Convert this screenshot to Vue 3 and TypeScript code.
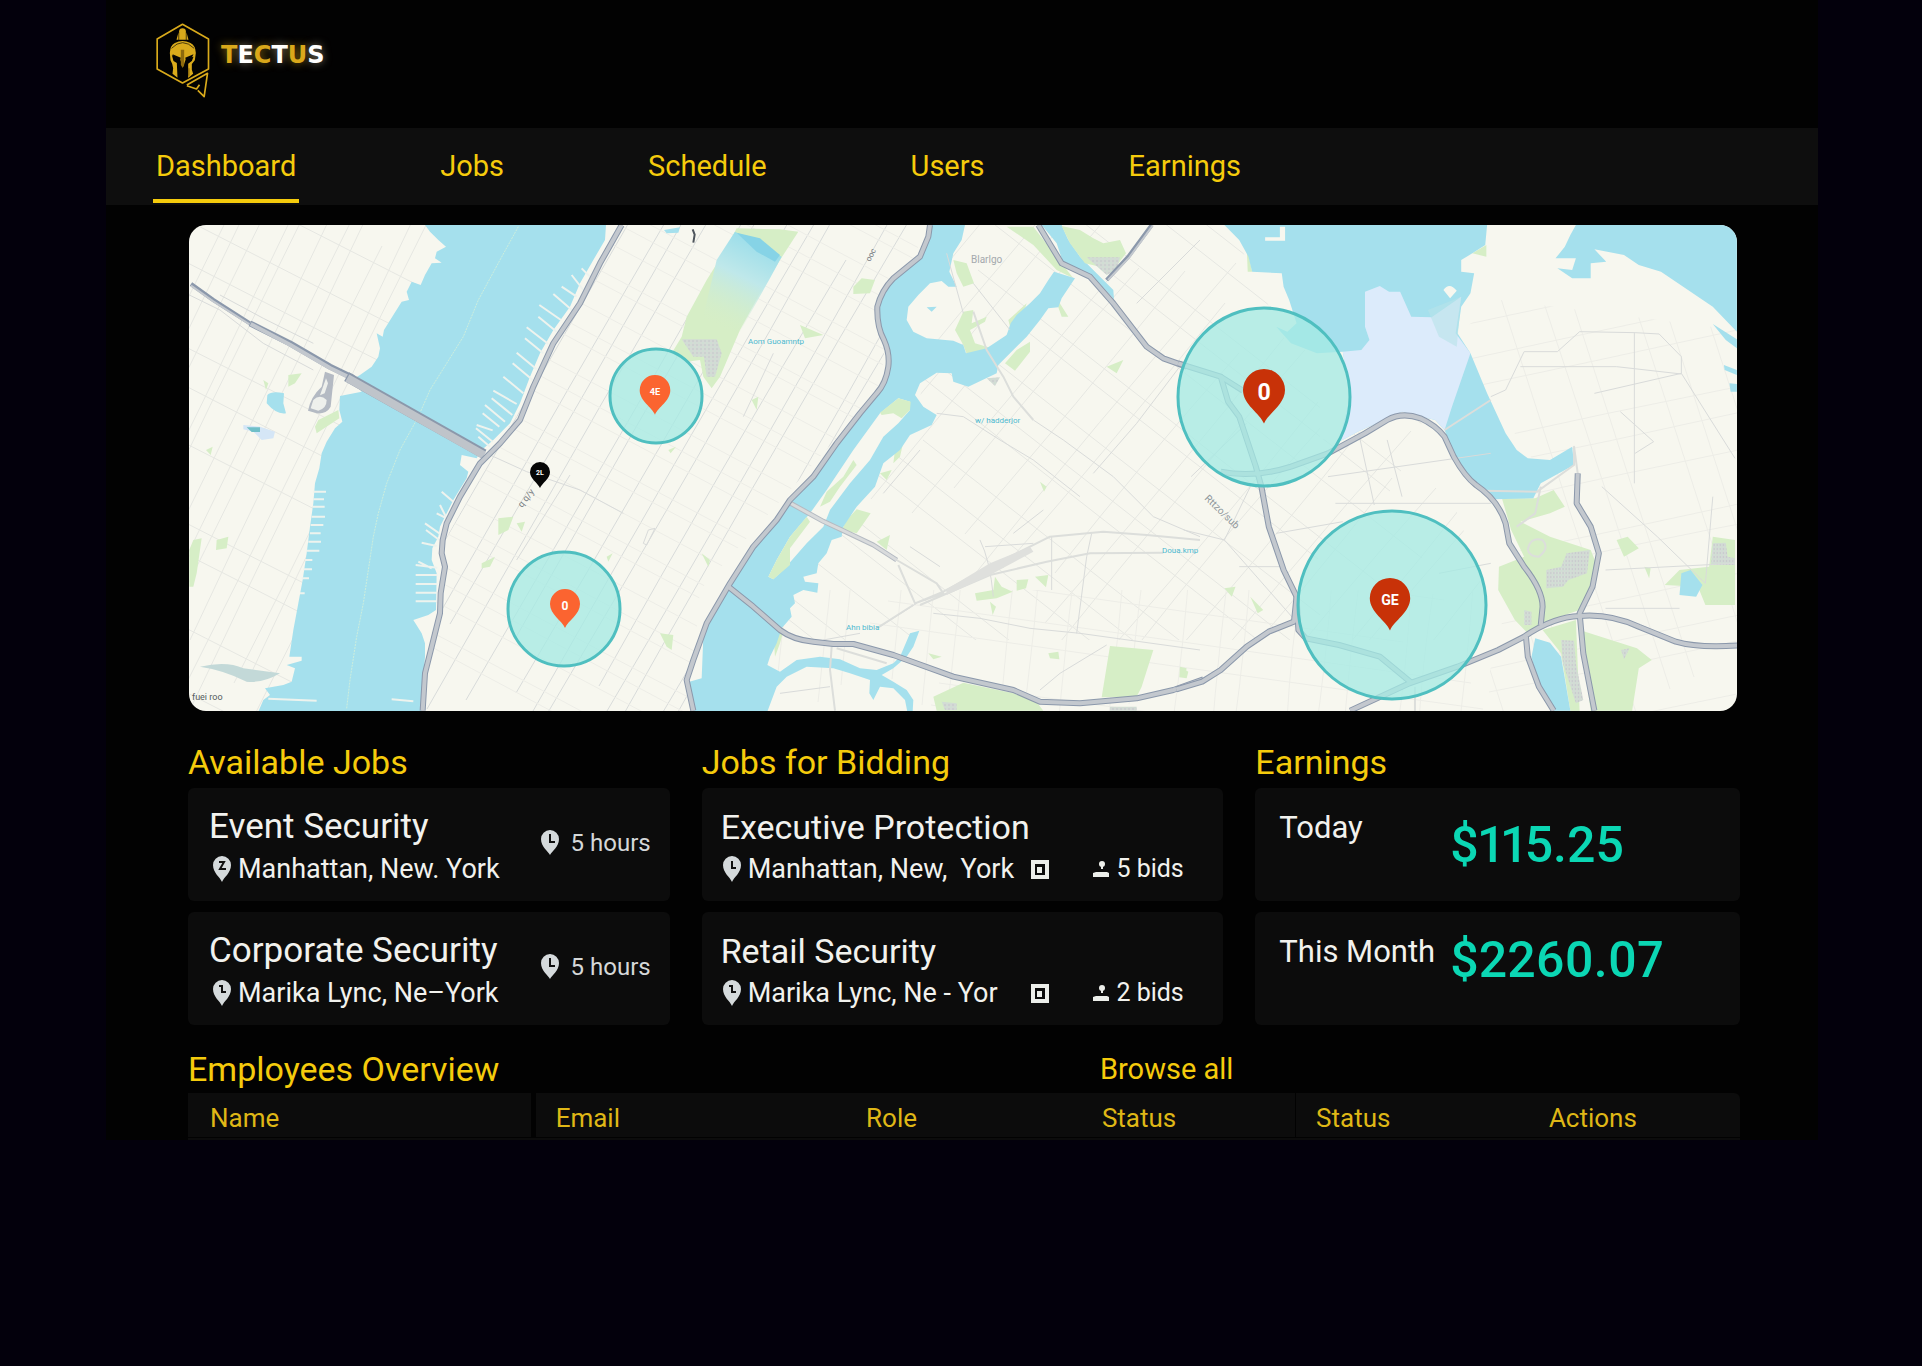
<script setup lang="ts">
interface Job { title: string; place: string; mark: string; note: string }
interface Pin { x: number; y: number; scale: number; color: string; label: string; size: number }
interface Zone { x: number; y: number; rx: number; ry: number }
interface Label { x: number; y: number; text: string; size: number; color: string; angle: number }

const navItems = ['Dashboard', 'Jobs', 'Schedule', 'Users', 'Earnings']
const columns = ['Name', 'Email', 'Role', 'Status', 'Status', 'Actions']
const brand = 'TECTUS'.split('')
const whiteLetters = [1, 3, 5]

const availableJobs: Job[] = [
  { title: 'Event Security', place: 'Manhattan, New. York', mark: 'M-3 -4H2L-2 3H4', note: '5 hours' },
  { title: 'Corporate Security', place: 'Marika Lync, Ne–York', mark: 'M-3 -4H0V2H4', note: '5 hours' },
]
const biddingJobs: Job[] = [
  { title: 'Executive Protection', place: 'Manhattan, New,\u00a0 York', mark: 'M0 -5V2H4', note: '5 bids' },
  { title: 'Retail Security', place: 'Marika Lync, Ne - Yor', mark: 'M-3 -4H0V2H4', note: '2 bids' },
]
const earnings = [
  { label: 'Today', amount: '$115.25', centered: true },
  { label: 'This Month', amount: '$2260.07', centered: false },
]

const zones: Zone[] = [
  { x: 656, y: 396, rx: 46, ry: 47 },
  { x: 564, y: 609, rx: 56, ry: 57 },
  { x: 1264, y: 397, rx: 86, ry: 89 },
  { x: 1392, y: 605, rx: 94, ry: 94 },
]
const pins: Pin[] = [
  { x: 655, y: 375, scale: 1.53, color: '#fb6430', label: '4E', size: 6 },
  { x: 565, y: 589, scale: 1.5, color: '#fb6430', label: '0', size: 8 },
  { x: 540, y: 462, scale: 1, color: '#060606', label: '2L', size: 7 },
  { x: 1264, y: 369, scale: 2.1, color: '#c83208', label: '0', size: 11 },
  { x: 1390, y: 578, scale: 2.02, color: '#c83208', label: 'GE', size: 7 },
]
const labels: Label[] = [
  { x: 748, y: 344, text: 'Aom Guoamntp', size: 8, color: '#4db9cf', angle: 0 },
  { x: 975, y: 423, text: 'w/ hadderjor', size: 8, color: '#4db9cf', angle: 0 },
  { x: 1162, y: 553, text: 'Doua.kmp', size: 8, color: '#4db9cf', angle: 0 },
  { x: 846, y: 630, text: 'Ahn bibia', size: 8, color: '#4db9cf', angle: 0 },
  { x: 971, y: 263, text: 'Blarlgo', size: 10, color: '#a4a9ad', angle: 0 },
  { x: 1204, y: 499, text: 'Rttzo/sub', size: 10, color: '#90979c', angle: 44 },
  { x: 192, y: 700, text: 'fuei roo', size: 9, color: '#555c60', angle: 0 },
  { x: 522, y: 508, text: 'q q/y', size: 9, color: '#777e84', angle: -52 },
  { x: 870, y: 262, text: 'ooc', size: 8, color: '#777e84', angle: -62 },
]

/** Parallel streets with a small irregularity, centred on (cx, cy). */
function streets(cx: number, cy: number, deg: number, gap: number, count: number, length: number): string {
  const a = (deg * Math.PI) / 180
  const dx = Math.cos(a)
  const dy = Math.sin(a)
  let d = ''
  for (let i = 0; i < count; i++) {
    const off = (i - count / 2) * gap + Math.sin(i * 2.3) * gap * 0.25
    const half = length * (0.42 + 0.08 * Math.sin(i * 1.7))
    const px = cx - dy * off
    const py = cy + dx * off
    const bend = Math.sin(i * 3.1) * 5
    d += `M${Math.round(px - dx * half)} ${Math.round(py - dy * half)}`
    d += `Q${Math.round(px + bend)} ${Math.round(py + bend)} ${Math.round(px + dx * half)} ${Math.round(py + dy * half)}`
  }
  return d
}

const jerseyStreets = streets(300, 450, -64, 19, 30, 640) + streets(300, 450, 27, 52, 14, 500)
const manhattanAvenues = streets(700, 460, -60, 22, 26, 720)
const manhattanStreets = streets(700, 460, 28, 21, 30, 600)
const queensStreets = streets(1120, 500, 38, 34, 24, 560) + streets(1120, 440, -50, 30, 26, 420)
const queensSouth = streets(1180, 640, 8, 34, 8, 640) + streets(1180, 640, -84, 36, 22, 200)
const eastStreets = streets(1620, 480, -12, 38, 16, 420) + streets(1640, 480, 72, 40, 12, 560)

const majorRoads = {
  west: ['M1325 15L1260 130L1200 250L1120 370L1060 500L1020 600L960 670L900 730L840 830L800 910L788 960L785 1000L795 1040L782 1120L780 1180L755 1280L735 1360L728 1472'],
  center: [
    'M750 15L745 50L720 110L640 175Q605 210 592 260Q590 320 612 360Q630 400 625 440Q618 490 590 520L540 580L470 670L400 770L330 840L290 900L220 980L150 1090L80 1210L40 1320L20 1380L40 1472',
    'M145 1100L220 1160L300 1230Q340 1260 400 1265L460 1272L520 1272L640 1305L820 1370L1000 1410L1080 1445L1200 1450L1370 1435L1480 1410L1570 1378',
    'M1075 15L1145 130L1230 170L1300 250L1400 380L1450 415L1520 440',
  ],
  east: [
    'M-5 430L110 470L130 545L160 590L205 740L220 800L240 920L280 1050L315 1130L308 1205L240 1235L180 1280L110 1350L60 1385L-10 1408',
    'M110 470L170 512',
    'M110 755Q200 775 300 740L400 700L500 640L560 600Q600 575 650 595Q690 615 715 650L740 710Q770 770 800 795Q860 840 880 910L890 970L930 1040Q980 1110 980 1160L975 1215',
    'M315 1130L320 1230L340 1255L430 1275L540 1310L625 1388',
    'M460 1472L620 1390L750 1340L860 1290L930 1250Q1010 1190 1080 1188Q1160 1180 1240 1220L1340 1265Q1400 1285 1515 1276',
    'M1075 760L1072 850L1110 920L1132 1000L1115 1100L1080 1180L1090 1300L1120 1472',
    'M935 1250L940 1310L970 1400L1010 1472',
  ],
}

const piers =
  'M1120 222l60 52M1145 200l45 30M1175 165l35 45M1205 145l30 30M1078 255l65 45M1075 290l55 45M1040 322l65 50M1035 355l55 45M1010 398l60 50M998 430l60 50M970 470l60 50M940 512l70 40M935 535l62 50M915 555l60 50M908 580l50 40M890 615l48 16M888 625l50 40M895 650l35 30' +
  'M785 815l35 30M770 880l40 20M780 855l25 50M735 910l50 35M738 930l40 30M725 968l45 10M707 1035l65 8M715 1025l40 20M707 1065h65M707 1092h65M707 1118h65M707 1144h65M635 1438l65 6M265 1436l145 6' +
  'M400 815h38M400 838h32M398 860h36M395 890h40M392 915h38M390 940h32M385 965h38M380 992h38M375 1020h22M370 1048h26M365 1075h22M360 1120h14'
</script>

<template>
  <div class="page">
    <div class="frame">
      <header class="masthead">
        <a class="logo" href="#" aria-label="Tectus home">
          <svg class="logo-mark" viewBox="190 70 170 228" aria-hidden="true">
            <g fill="none" stroke="#d9aa1b" stroke-width="5" stroke-linejoin="round">
              <path d="M275 74L353 118V208L275 250L199 208V118Z" />
              <path d="M288 256L350 221L340 291L321 272M288 258L317 268L326 255" />
            </g>
            <g fill="#d9aa1b">
              <path d="M265 120V95Q265 86 275 86Q285 86 285 95V120Z" />
              <path d="M257 120L263 98V120ZM287 98L293 120H287Z" />
              <path d="M237 160Q238 137 252 130Q275 118 299 130Q314 137 315 160L312 182L303 193V210L307 222L292 235V192L303 184L308 171L285 178L276 204L268 178L243 166L248 184L258 190L260 234L245 222L247 206L244 192L239 182Z" />
            </g>
            <path d="M270 150h10v46l-5 8l-5 -8Z" fill="#8d6a0d" />
            <path d="M242 146Q275 112 310 146" fill="none" stroke="#050505" stroke-width="2" />
            <path d="M245 164L270 174L267 182L252 178ZM308 164L283 174L286 182L301 178Z" fill="#050505" />
            <path d="M294 206V228" stroke="#8d6a0d" stroke-width="4" />
          </svg>
          <span class="wordmark"><span v-for="(c, i) in brand" :key="i" :class="{ light: whiteLetters.includes(i) }">{{ c }}</span></span>
        </a>
      </header>

      <nav class="nav">
        <a v-for="(item, i) in navItems" :key="item" href="#" :class="['nav-link', { active: i === 0 }]">{{ item }}</a>
      </nav>

      <main class="content">
        <svg class="map" viewBox="189 225 1548 486" preserveAspectRatio="xMidYMid slice" role="img" aria-label="Job locations in New York">
          <defs>
            <pattern id="dots" width="4" height="4" patternUnits="userSpaceOnUse">
              <rect width="4" height="4" fill="#dcdeda" />
              <circle cx="1" cy="1" r="1" fill="#b9bfc4" />
              <circle cx="3" cy="3" r="1" fill="#c5e3cf" />
            </pattern>
            <linearGradient id="reservoir" x1="0.7" y1="0" x2="0.3" y2="1">
              <stop offset="0" stop-color="#93dbea" />
              <stop offset="0.45" stop-color="#bfe8ea" />
              <stop offset="1" stop-color="#d6eec6" stop-opacity="0" />
            </linearGradient>
            <clipPath id="clip-jersey"><path d="M189 225H450L370 390L330 470L300 711H189Z" /></clipPath>
            <clipPath id="clip-manhattan"><path d="M620 225H930L890 300L880 390L700 590L690 711H420L445 540L490 460Z" /></clipPath>
            <clipPath id="clip-queens"><path d="M940 225H1230L1290 350H1320V440L1420 420L1460 520L1500 640H760L800 540L920 400Z" /></clipPath>
            <clipPath id="clip-south"><path d="M780 590H1500V711H760Z" /></clipPath>
            <clipPath id="clip-east"><path d="M1500 300L1737 330V711H1480L1540 470L1450 340Z" /></clipPath>
          </defs>

          <rect x="180" y="220" width="1570" height="500" fill="#f7f7ef" />

          <g class="streets">
            <path :d="jerseyStreets" clip-path="url(#clip-jersey)" />
            <g clip-path="url(#clip-manhattan)">
              <path class="strong" :d="manhattanAvenues" />
              <path class="faint" :d="manhattanStreets" />
            </g>
            <path :d="queensStreets" clip-path="url(#clip-queens)" />
            <path :d="queensSouth" class="faint" clip-path="url(#clip-south)" />
            <path :d="eastStreets" class="faint" clip-path="url(#clip-east)" />
          </g>

          <!-- Hudson side -->
          <g transform="translate(180 220) scale(0.33333)">
            <path class="park" d="M325 465L365 460L345 490L325 500ZM415 600L475 570L478 595L410 640L405 620ZM78 690L98 680L92 705ZM110 960L145 950L140 985L108 990ZM40 960L65 955L50 1060L40 1100H28V990ZM955 895L1000 890L985 930L955 945ZM1010 910L1035 905L1025 935ZM905 1030L945 1010L930 1040L905 1045ZM1280 1010L1298 1000L1285 1025ZM1440 1240L1480 1245L1475 1290L1460 1280ZM1465 690L1488 680L1472 700ZM250 480L265 490L258 510Z" />
            <path class="water" d="M735 15L750 35L775 60L798 80L770 95L765 115L785 128L755 130L735 165L722 195L695 185L680 215L687 240L665 245L640 285L612 330L608 350L590 340L600 385L595 410L575 440L540 465L515 480L545 515L480 528L478 570L487 605L465 625L440 665L425 700L418 745L405 790L400 850L390 920L380 1000L368 1080L355 1150L340 1230L328 1310H365V1322L320 1335L345 1345L335 1385L310 1395L255 1405L270 1425L250 1440L235 1475H725L728 1400L735 1310V1270L725 1240L700 1200L745 1185L768 1170L770 1060L755 1020L757 985L775 950L780 920L800 880L820 840L860 775L865 755L840 735L845 705L890 715L905 690L940 660L990 610L1020 550L1050 470L1080 400L1120 330L1170 260L1200 190L1240 120L1275 60L1278 15Z" />
            <path class="water" d="M262 525Q275 512 312 520L310 550L318 580Q290 585 260 550Z" />
            <path d="M190 615L240 620L285 635L280 655L245 660L220 635L190 628Z" fill="#d5e6f6" />
            <path d="M200 622L240 622V636H215Z" fill="#6fbfc8" />
            <path d="M60 1340Q140 1322 190 1345L300 1360Q250 1390 200 1385Q130 1350 60 1340Z" fill="#c3d9d8" />
            <path d="M1452 30L1500 22L1495 38L1460 40Z" fill="#a5e0ed" />
            <path d="M1538 28l6 16l-4 24" fill="none" stroke="#4e555c" stroke-width="6" />
            <path class="pier" :d="piers" />
            <path d="M1015 20L960 120L895 240L850 350L800 430L750 510L715 590L660 690L620 790L595 880L580 950L565 1050L550 1150L530 1250L510 1380L500 1465" fill="none" stroke="#cdeedd" stroke-width="3" stroke-dasharray="6 3" />
            <path class="lane" d="M28 225L120 270L250 370L400 450M120 225L250 295L400 370M930 705L1040 755L1200 810L1330 880M1170 765L1010 1020M1390 970L1405 930L1425 925L1400 975Z" />
            <path d="M435 455L462 465L452 560Q440 582 410 580L384 572Q392 530 425 500Z" fill="#b4bac3" />
            <path d="M438 475L444 490L434 520L420 526ZM400 540Q420 520 440 540Q440 565 415 572L392 565Z" fill="#eef0ec" />
            <path class="casing thin" d="M33 192L100 240L210 310" />
            <path class="road thin" d="M33 197L100 244L210 314" />
            <path class="casing" d="M210 310L330 370L450 440L520 474" />
            <path class="road" d="M212 312L330 374L450 444L520 478" />
            <path class="casing wide" d="M500 470L912 702" />
            <path class="road wide" d="M502 474L912 706" />
            <path v-for="d in majorRoads.west" :key="d" class="casing" :d="d" />
            <path v-for="d in majorRoads.west" :key="'r' + d" class="road" :d="d" />
          </g>

          <!-- East River -->
          <g transform="translate(680 220) scale(0.33333)">
            <path class="park" d="M170 25L300 28L355 35L300 120L240 220L180 330L120 470L95 505L70 470L60 420L20 425L-25 400L5 350L20 290L80 180L130 100Z" />
            <path d="M165 35L305 110L270 175L180 335L60 330L110 120Z" fill="url(#reservoir)" />
            <path d="M170 38L240 55L300 105L285 125L230 95Z" fill="#86d3e6" />
            <path d="M5 358H110L125 400L105 470H80L72 410H40Z" fill="url(#dots)" />
            <path class="park" d="M820 120L860 130L882 190L850 200L830 160ZM825 330L850 275L880 270L875 310L920 290L915 305L870 330L885 370L935 385L860 402L850 375ZM975 430L1010 390L1050 365L1050 395L1005 452ZM985 300L1040 250L1030 280L990 320ZM1130 235L1165 290L1145 290L1135 262ZM520 200L545 175L585 180L570 220L520 222ZM500 900L530 868L572 880L530 940L485 930ZM645 690L668 675L660 710L640 730ZM600 760L635 750L620 780ZM590 965L630 945L620 990ZM885 1120L940 1110L945 1070L965 1100L998 1115L950 1135L890 1142ZM1010 1080L1045 1078L1038 1105L1010 1112ZM1065 1070L1105 1065L1098 1102ZM930 1145L948 1160L938 1185ZM1290 1278L1420 1290L1385 1400L1370 1430L1265 1432ZM850 1388L1000 1420L1065 1440L1090 1472H770L760 1430ZM1105 1300L1135 1295L1138 1318L1110 1315ZM1500 1340L1525 1355L1520 1375L1498 1372ZM280 1240L310 1235L300 1270L285 1310ZM1280 440L1330 420L1310 460ZM215 540L235 530L230 570ZM65 1000L90 1020L85 1040ZM360 315L430 345L375 355ZM745 1300L785 1310L760 1318ZM1080 785L1100 800L1092 815ZM980 20H1060L1145 130L1180 175L1130 150L1060 75Z" />
            <path class="water" d="M755 15H855L845 60L820 100L808 155L830 200H805L785 183L750 190L715 225L685 260L680 300L700 335L740 355L820 362L850 375L858 400L920 385L980 345L992 310L1010 285L1050 250L1080 220L1105 180L1122 155L1185 175L1145 235L1135 262L1105 265L1080 300L1040 350L955 435L950 460L865 500L820 485L815 460L770 458L720 490L705 525L730 560L770 585L755 615L690 645L660 690L610 730L585 800L530 860L490 920L485 950L455 960L440 1000L415 1030L410 1060L370 1070L375 1085L415 1090L412 1118L370 1110L340 1125L345 1150L330 1165L335 1190L305 1225L290 1270L270 1310L262 1335L300 1355L350 1320L420 1310L480 1318L540 1345L590 1350L640 1330L660 1310L690 1240L718 1232L700 1280L680 1310L640 1345L605 1365L640 1385L680 1410L700 1440L698 1475H682L675 1440L640 1405L600 1400L580 1440L568 1420L570 1380L510 1360L460 1345L380 1340L320 1370L290 1400L262 1475H40L30 1440L28 1385L65 1375L70 1250L130 1110L200 1010L320 860L420 740L480 650L600 510L630 440L625 380L595 300L605 230L640 170L720 110L745 50Z" />
            <path class="land" d="M655 535L690 545V570L655 610L610 650L570 720L510 790L450 870L430 920L380 970L310 1050L280 1078L265 1070L290 1020L330 950L390 880L440 810L520 690L600 580Z" />
            <path class="park" d="M655 535L692 545L690 570L665 595L640 580L605 585L600 578ZM520 720L530 735L480 800L450 845L420 860L440 815L490 770ZM380 890L390 905L330 985L330 1035L280 1078L265 1070L290 1020L330 950Z" />
            <path class="water" d="M1085 15H1145L1165 60L1200 110L1300 210L1302 238L1240 170L1150 130L1130 70ZM740 262L770 260L755 275Z" />
            <path class="park" d="M1145 18L1200 30L1240 55L1270 70L1320 60L1338 100L1300 150L1215 130L1170 70Z" />
            <path d="M1220 112H1320L1310 150L1280 165ZM920 475L960 472L945 498ZM785 1445L830 1450V1470H795ZM1290 1460H1370V1472H1290Z" fill="url(#dots)" />
            <path class="lane" d="M770 580L850 590L960 660L1060 720L1200 830M1560 360L1370 610L1240 760M1090 870L1000 940M190 590L280 400M690 980L780 1040M900 960Q930 1020 940 1130M1115 950V1110M1235 940L1220 1010M1220 1010L1190 1240M760 1180L900 1195L1050 1225L1200 1240L1560 1290M850 280L800 100M720 690L610 820M880 190L990 330M540 1240L430 1260M1080 1410L1140 1360L1280 1275M1560 60L1370 250M600 1220L710 1150M915 980L1060 970M300 1420L450 1400M1060 600L1150 660L1300 770L1420 890L1560 950" />
            <path class="rail" d="M650 1020L770 1090L790 1120L705 1150M655 1035L705 1150L790 1115L930 1040L1110 950L1270 935L1400 945L1560 960M720 1155L930 1065L1100 1025L1230 1000L1450 998M590 1225L700 1155M880 275L920 390L970 470L1000 530L1060 600M455 1280L450 1350L465 1472M470 1285L620 1330" />
            <path d="M800 1108L930 1030L1050 980L1060 995L940 1060L800 1125Z" fill="#dfe0dd" />
            <path class="casing light" d="M330 849L430 904L490 932L580 975L650 1020" />
            <path class="road light" d="M330 849L430 904L490 932L580 975L650 1020" />
            <path class="casing thin" d="M1415 15L1345 110L1280 180" />
            <path class="road thin" d="M1418 17L1348 112L1284 180" />
            <path v-for="d in majorRoads.center" :key="d" class="casing" :d="d" />
            <path v-for="d in majorRoads.center" :key="'r' + d" class="road" :d="d" />
          </g>

          <!-- Flushing Bay -->
          <g transform="translate(1180 220) scale(0.37 0.33333)">
            <path class="park" d="M870 835H960L1010 810L1040 860L1000 880L920 905L1000 950L1110 990L1132 1050L1080 1170L1000 1200L940 1240L905 1200L860 1110L862 1040L930 1010L895 930ZM1080 1230L1235 1285L1275 1320L1240 1345L1222 1472H1110ZM980 1230L1070 1200L1080 1472H1055L1030 1300ZM1440 950L1500 960V1155L1420 1155L1400 1100L1310 1095L1350 1050L1430 1040ZM1180 960L1210 950L1240 985L1200 1010ZM1255 1040L1272 1045L1268 1075ZM180 75L195 155H183ZM790 100L828 75V110ZM120 1105L150 1100L140 1130ZM190 1130L225 1170L210 1180ZM0 1340L18 1345L14 1365H0Z" />
            <path class="water" d="M120 15H830L825 75L790 100L760 120V155L795 160L785 220L760 260L750 340L785 400L830 520L880 640L910 690L940 715L1000 720L1060 680L1065 735L975 790L955 835L850 838L820 810L775 770L740 700L715 630L690 600L600 575L480 635L430 665L460 530L440 395L370 400L300 370L260 320L290 335L315 310L295 240L280 200L275 160L195 155L185 110L160 60Z" />
            <path d="M500 215L540 198L565 215H595L625 290L680 292L760 230L745 340L785 400L760 480L735 560L715 630L690 600L600 575L480 635L430 665L460 530L440 395L490 390L512 360L500 320Z" fill="#dcebfb" />
            <path d="M670 270L760 230L748 380L700 350Z" fill="#b8e2ea" opacity="0.6" />
            <path class="land" d="M712 210Q728 185 748 212L730 235ZM230 52H270V20H284V62H230Z" />
            <path class="water" d="M1070 15H1505V335L1440 260L1380 215L1300 155L1240 135L1200 105L1120 88L1152 125L1110 130V175L1060 175L1020 145L1060 150L1070 115L1015 115L1040 80L1055 45ZM1440 312L1505 358V385L1475 360ZM1470 435L1505 450V465L1472 450ZM1485 490L1505 492V515H1488ZM960 1255L1000 1268L1030 1310L1055 1472H1010L970 1400L950 1310ZM1355 1060L1380 1050L1412 1095L1395 1130L1350 1125Z" />
            <path d="M1045 1000L1108 990L1100 1060L1050 1080L1035 1100L990 1105V1050L1030 1040ZM1030 1260L1065 1262L1070 1330L1090 1440L1070 1450L1035 1330ZM930 1170L950 1175V1215H930ZM1440 970L1475 968L1480 1010L1500 1015V1035H1435ZM1192 1290L1215 1285L1200 1318Z" fill="url(#dots)" />
            <path class="rail" d="M715 630L840 540M820 812L965 815L1065 735V680L1075 760M975 800L960 880L910 920M940 990Q945 950 980 960Q1000 985 970 1010Q945 1010 940 990M635 1400V1472" />
            <path class="lane" d="M840 530L880 510L930 395H1020L1080 335L1230 338L1295 342L1355 410V460L1500 715M920 440H1180L1355 462M1228 338V790M1355 460L1120 520M485 650L525 855M560 660L600 830M30 770L180 610M10 930L120 960L190 800M120 960L310 1200M400 770L840 700M420 850L840 850M260 940L440 905M1190 575L1280 665L1230 700M1140 800L1290 950L1420 1090L1440 830M1150 1050L1500 1030M1150 1165H1350M160 1040H280M840 1030L700 1060" />
            <path v-for="d in majorRoads.east" :key="d" class="casing" :d="d" />
            <path v-for="d in majorRoads.east" :key="'r' + d" class="road" :d="d" />
          </g>

          <text
            v-for="l in labels"
            :key="l.text"
            class="map-label"
            :font-size="l.size"
            :fill="l.color"
            :transform="`translate(${l.x} ${l.y}) rotate(${l.angle})`"
          >{{ l.text }}</text>

          <ellipse v-for="z in zones" :key="z.x" class="zone" :cx="z.x" :cy="z.y" :rx="z.rx" :ry="z.ry" />
          <g v-for="p in pins" :key="p.x" :transform="`translate(${p.x} ${p.y}) scale(${p.scale})`">
            <path d="M0 26C-2 21 -10 17 -10 10A10 10 0 1 1 10 10C10 17 2 21 0 26Z" :fill="p.color" />
            <text class="pin-label" y="11" dominant-baseline="central" :font-size="p.size">{{ p.label }}</text>
          </g>
        </svg>

        <div class="panels">
          <section class="panel">
            <h2>Available Jobs</h2>
            <article v-for="job in availableJobs" :key="job.title" class="card job">
              <div>
                <h3>{{ job.title }}</h3>
                <p class="place">
                  <svg class="pin" viewBox="-9 -10 18 26" aria-hidden="true">
                    <path d="M0 16C-2 11 -9 7 -9 -1A9 9 0 1 1 9 -1C9 7 2 11 0 16Z" fill="#d5dadc" />
                    <path :d="job.mark" fill="none" stroke="#111" stroke-width="2" />
                  </svg>
                  {{ job.place }}
                </p>
              </div>
              <p class="hours">
                <svg class="pin" viewBox="-9 -10 18 26" aria-hidden="true">
                  <path d="M0 15C-2 11 -9 7 -9 -1A9 9 0 1 1 9 -1C9 7 2 11 0 15Z" fill="#d5dadc" />
                  <path d="M0 -6V2H5" fill="none" stroke="#111" stroke-width="2" />
                </svg>
                {{ job.note }}
              </p>
            </article>
          </section>

          <section class="panel">
            <h2>Jobs for Bidding</h2>
            <article v-for="job in biddingJobs" :key="job.title" class="card bid">
              <h3>{{ job.title }}</h3>
              <div class="bid-row">
                <p class="place">
                  <svg class="pin" viewBox="-9 -10 18 26" aria-hidden="true">
                    <path d="M0 16C-2 11 -9 7 -9 -1A9 9 0 1 1 9 -1C9 7 2 11 0 16Z" fill="#d5dadc" />
                    <path :d="job.mark" fill="none" stroke="#111" stroke-width="2" />
                  </svg>
                  {{ job.place }}
                </p>
                <svg class="badge" viewBox="0 0 18 19" aria-hidden="true">
                  <path d="M2 2H16V17H2Z" fill="#0b0b0b" stroke="#eceeea" stroke-width="4" />
                  <rect x="6" y="7" width="5" height="6" fill="#eceeea" />
                </svg>
                <p class="bids">
                  <svg class="bidder" viewBox="0 0 18 18" aria-hidden="true">
                    <circle cx="10" cy="4" r="3" fill="#eceeea" />
                    <path d="M9 6H11V9H9ZM1 13L4 12H15L17 13V17H1Z" fill="#eceeea" />
                  </svg>
                  {{ job.note }}
                </p>
              </div>
            </article>
          </section>

          <section class="panel">
            <h2>Earnings</h2>
            <article v-for="e in earnings" :key="e.label" class="card earning">
              <h3 class="period">{{ e.label }}</h3>
              <p :class="['amount', { centered: e.centered }]">{{ e.amount }}</p>
            </article>
          </section>
        </div>

        <section>
          <div class="overview-head">
            <h2>Employees Overview</h2>
            <a href="#" class="browse">Browse all</a>
          </div>
          <table class="employees">
            <thead>
              <tr>
                <th v-for="(c, i) in columns" :key="i" scope="col">{{ c }}</th>
              </tr>
            </thead>
          </table>
        </section>
      </main>
    </div>
  </div>
</template>

<style>
body {
  background: #03000c;
}
</style>

<style scoped>
.page {
  min-height: 100vh;
  background: #03000c;
  font-family: Roboto, "Liberation Sans", sans-serif;
  color: #f2f2ee;
}
.page *,
.page *::before {
  box-sizing: border-box;
}
.frame {
  margin: 0 104px 0 106px;
  background: #020202;
}
h2,
h3,
p {
  margin: 0;
  font-weight: 400;
}
a {
  text-decoration: none;
}
h2 {
  font-size: 34px;
  line-height: 40px;
  color: #f5cb0c;
}
h3 {
  font-size: 34px;
  line-height: 40px;
}

.masthead {
  height: 128px;
  padding: 23px 48px 0;
}
.logo {
  display: inline-flex;
  align-items: flex-start;
  gap: 10px;
}
.logo-mark {
  width: 57px;
  height: 76px;
}
.wordmark {
  margin-top: 18px;
  font-family: "DejaVu Sans", sans-serif;
  font-size: 24px;
  font-weight: 700;
  line-height: 28px;
  color: #d9a81a;
  text-shadow: 0 0 8px rgba(217, 168, 26, 0.6);
}
.wordmark .light {
  color: #fff;
  text-shadow: 0 0 8px rgba(255, 240, 200, 0.5);
}

.nav {
  display: flex;
  gap: 138px;
  height: 77px;
  padding: 0 47px;
  background: #0e0e0e;
}
.nav-link {
  height: 75px;
  padding: 21px 3px 0;
  border-bottom: 4px solid transparent;
  font-size: 29px;
  line-height: 34px;
  color: #f5cb0c;
}
.nav-link.active {
  border-color: #f5cb0c;
}

.content {
  padding: 20px 78px 0 82px;
}
.map {
  display: block;
  width: calc(100% - 4px);
  height: auto;
  margin-left: 1px;
  border-radius: 17px;
}
.streets path {
  fill: none;
  stroke: #e6e7e2;
  stroke-width: 1;
}
.streets .strong {
  stroke: #d8dbda;
}
.streets .faint {
  stroke: #ededE7;
}
.water {
  fill: #a5e0ed;
}
.land {
  fill: #f7f7ef;
}
.park {
  fill: #d6eec6;
}
.pier,
.lane,
.rail,
.casing,
.road {
  fill: none;
  stroke-linejoin: round;
  vector-effect: non-scaling-stroke;
}
.pier {
  stroke: #eef3ee;
  stroke-width: 2;
}
.lane {
  stroke: #d9dbda;
  stroke-width: 1;
}
.rail {
  stroke: #dcdedb;
  stroke-width: 2;
}
.casing {
  stroke: #8b98ab;
  stroke-width: 6;
}
.road {
  stroke: #c3c8ce;
  stroke-width: 4;
}
.casing.thin {
  stroke-width: 4;
}
.road.thin {
  stroke-width: 2;
}
.casing.light {
  stroke: #b4bac2;
  stroke-width: 5;
}
.road.light {
  stroke: #d9dbdc;
  stroke-width: 3;
}
.casing.wide {
  stroke-width: 10;
}
.road.wide {
  stroke: #bfc4ca;
  stroke-width: 8;
}
.zone {
  fill: #a4eae3;
  fill-opacity: 0.76;
  stroke: #4fbfc0;
  stroke-width: 3;
}
.map-label {
  font-family: Roboto, sans-serif;
}
.pin-label {
  fill: #fff;
  font-weight: 700;
  text-anchor: middle;
}

.panels {
  display: grid;
  grid-template-columns: 482fr 522fr 485fr;
  gap: 32px;
  margin-top: 31px;
}
.panel h2 {
  margin-bottom: 6px;
}
.card {
  height: 113px;
  padding: 19px 19px 0 21px;
  border-radius: 6px;
  background: #0c0c0c;
}
.card + .card {
  margin-top: 11px;
}
.job {
  display: flex;
  justify-content: space-between;
}
.job h3 {
  font-size: 35px;
}
.place,
.bids,
.hours {
  display: flex;
  align-items: center;
  font-size: 27px;
  line-height: 32px;
  white-space: nowrap;
}
.place {
  gap: 7px;
  margin-top: 6px;
}
.pin {
  width: 18px;
  height: 26px;
}
.place .pin {
  margin-left: 4px;
}
.hours {
  gap: 12px;
  height: 32px;
  margin-top: 20px;
  font-size: 24px;
  color: #d5d8d8;
}
.bid {
  padding-left: 19px;
}
.place + .badge {
  margin-top: 6px;
}
.bid .pin {
  margin-left: 2px;
}
.bid-row {
  display: grid;
  grid-template-columns: 311fr 61fr 112fr;
  align-items: center;
}
.badge {
  width: 18px;
  height: 19px;
}
.bids {
  gap: 6px;
  margin-top: 5px;
  font-size: 25px;
}
.bidder {
  width: 18px;
  height: 18px;
}
.earning {
  display: grid;
  grid-template-columns: 171px 1fr;
  padding: 0 24px;
}
.period {
  padding-top: 20px;
  font-size: 31px;
}
.amount {
  padding-top: 20px;
  font-size: 50px;
  font-weight: 500;
  font-variant-numeric: proportional-nums;
  line-height: 56px;
  color: #0bd7b4;
}
.amount.centered {
  align-self: center;
  padding-top: 0;
}

.overview-head {
  display: grid;
  grid-template-columns: 912fr 640fr;
  align-items: center;
  margin: 24px 0 4px;
}
.browse {
  font-size: 29px;
  line-height: 38px;
  color: #f5cb0c;
}
.employees {
  width: 100%;
  table-layout: fixed;
  border-collapse: separate;
  border-spacing: 0;
  border-bottom: 2px solid #0c0c0c;
}
.employees th {
  height: 45px;
  padding: 6px 0 0 20px;
  border-bottom: 1px solid #020202;
  background: #0c0c0c;
  font-size: 26px;
  font-weight: 400;
  line-height: 30px;
  text-align: left;
  color: #dfb716;
}
.employees th:nth-child(1) {
  width: 22.4%;
  padding-left: 22px;
  border-right: 5px solid #020202;
}
.employees th:nth-child(2) {
  width: 20%;
}
.employees th:nth-child(3) {
  width: 15.2%;
}
.employees th:nth-child(4) {
  width: 13.8%;
  border-right: 1px solid #020202;
}
.employees th:nth-child(5) {
  width: 15%;
}
.employees th:last-child {
  border-top-right-radius: 6px;
}
</style>
